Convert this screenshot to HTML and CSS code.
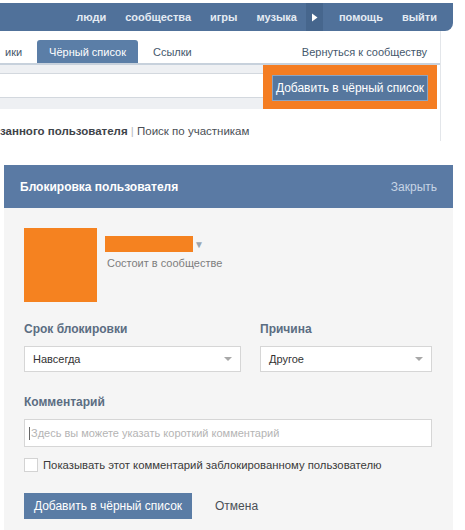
FILE: index.html
```html
<!DOCTYPE html>
<html>
<head>
    <meta charset="utf-8">
    <title>Чёрный список</title>
    <link rel="stylesheet" href="styles.css">
</head>
<body>
    <div class="page">
        <div class="topbar">
            <a class="nav-link">люди</a>
            <a class="nav-link">сообщества</a>
            <a class="nav-link">игры</a>
            <a class="nav-link">музыка</a>
            <span class="nav-more">
                <svg width="7" height="9" viewBox="0 0 7 9"><path d="M1 0.5 L6.5 4.5 L1 8.5 Z" fill="#fff"/></svg>
            </span>
            <a class="nav-link">помощь</a>
            <a class="nav-link">выйти</a>
        </div>

        <div class="content">
            <div class="tabs">
                <span class="tab">ики</span>
                <span class="tab tab-active">Чёрный список</span>
                <span class="tab">Ссылки</span>
                <span class="tab-back">Вернуться к сообществу</span>
            </div>

            <div class="search-row">
                <div class="search-field">
                    <div class="search-input"></div>
                </div>
                <div class="highlight">
                    <button class="btn btn-top">Добавить в чёрный список</button>
                </div>
            </div>

            <p class="sub-links"><b>занного пользователя</b> <span class="sep">|</span> Поиск по участникам</p>
        </div>
    </div>

    <div class="modal">
        <div class="modal-head">
            <span class="modal-title">Блокировка пользователя</span>
            <a class="modal-close">Закрыть</a>
        </div>
        <div class="modal-body">
            <div class="user">
                <div class="avatar"></div>
                <div class="user-info">
                    <div class="user-name">
                        <span class="name-bar"></span>
                        <span class="name-arrow">▼</span>
                    </div>
                    <div class="user-status">Состоит в сообществе</div>
                </div>
            </div>

            <div class="fields">
                <div class="field field-term">
                    <div class="label">Срок блокировки</div>
                    <div class="select">
                        <span>Навсегда</span>
                        <span class="select-arrow"></span>
                    </div>
                </div>
                <div class="field field-reason">
                    <div class="label">Причина</div>
                    <div class="select">
                        <span>Другое</span>
                        <span class="select-arrow"></span>
                    </div>
                </div>
            </div>

            <div class="label">Комментарий</div>
            <div class="comment">
                <span class="caret"></span>
                <span class="placeholder">Здесь вы можете указать короткий комментарий</span>
            </div>

            <label class="check">
                <span class="check-box"></span>
                Показывать этот комментарий заблокированному пользователю
            </label>

            <div class="actions">
                <button class="btn btn-main">Добавить в чёрный список</button>
                <a class="cancel">Отмена</a>
            </div>
        </div>
    </div>
</body>
</html>
```

FILE: styles.css
```css
body {
    margin: 0;
    padding: 0;
    width: 465px;
    height: 530px;
    overflow: hidden;
    background-color: #fff;
    font-family: "Liberation Sans", Arial, sans-serif;
    font-size: 12px;
    color: #333;
}

a {
    cursor: pointer;
}

/* top part of the page */

.page {
    height: 150px;
}

.topbar {
    display: flex;
    align-items: center;
    justify-content: flex-end;
    width: 453px;
    height: 28px;
    margin-top: 3px;
    padding-right: 16px;
    box-sizing: border-box;
    background-color: #50719a;
    border-bottom-right-radius: 8px;
}

.nav-link {
    margin-left: 19px;
    color: #e4ebf3;
    font-weight: bold;
    font-size: 11px;
}

.nav-more {
    display: flex;
    align-items: center;
    justify-content: center;
    width: 17px;
    height: 28px;
    margin-left: 9px;
    margin-right: -3px;
    background-color: #46668d;
}

.content {
    width: 440px;
    height: 110px;
    border-right: 1px solid #e3e6ea;
}

.tabs {
    display: flex;
    align-items: flex-end;
    height: 32px;
    font-size: 11px;
    border-bottom: 2px solid #c7d1dc;
}

.tab {
    padding: 0 15px 5px;
    color: #45586c;
}

.tab:first-child {
    padding-left: 5px;
}

.tab-active {
    padding: 6px 12px 5px;
    background-color: #5b7ea7;
    color: #fff;
    border-radius: 3px 3px 0 0;
}

.tab-back {
    margin-left: auto;
    padding: 0 13px 5px 0;
    color: #45586c;
}

.search-row {
    display: flex;
    height: 44px;
}

.search-field {
    flex: 1;
    padding-top: 8px;
    background-color: #eef0f3;
    height: 36px;
}

.search-input {
    height: 23px;
    background-color: #fff;
    border-top: 1px solid #d3d8de;
    border-bottom: 1px solid #d3d8de;
}

.highlight {
    width: 174px;
    margin-right: 3px;
    padding: 10px 9px 8px 9px;
    box-sizing: border-box;
    background-color: #f47d22;
}

.btn {
    font-family: "Liberation Sans", Arial, sans-serif;
    font-size: 12px;
    color: #fff;
    background-color: #56779e;
    border: 1px solid #8aa4c2;
    cursor: pointer;
}

.btn-top {
    width: 100%;
    height: 26px;
    padding: 0;
}

.sub-links {
    margin: 0;
    padding-top: 16px;
    font-size: 11.5px;
    color: #4a4f56;
}

.sub-links b {
    color: #3e4349;
}

.sep {
    color: #b5bac0;
}

/* block user dialog */

.modal {
    width: 449px;
    margin: 12px 0 0 4px;
    height: 368px;
    background-color: #f5f5f5;
}

.modal-head {
    display: flex;
    align-items: center;
    justify-content: space-between;
    height: 43px;
    padding: 0 16px;
    background-color: #5a7aa4;
}

.modal-title {
    color: #fff;
    font-weight: bold;
}

.modal-close {
    color: #c6d4e4;
}

.modal-body {
    padding: 20px 21px 0 20px;
}

.user {
    display: flex;
    height: 74px;
}

.avatar {
    width: 73px;
    height: 74px;
    background-color: #f58220;
}

.user-info {
    padding: 8px 0 0 8px;
}

.user-name {
    display: flex;
    align-items: center;
    height: 16px;
}

.name-bar {
    display: inline-block;
    width: 88px;
    height: 16px;
    background-color: #f58220;
}

.name-arrow {
    margin-left: 1px;
    font-size: 10px;
    color: #9aa5b0;
}

.user-status {
    margin: 5px 0 0 2px;
    font-size: 11px;
    color: #7d7d7d;
}

.fields {
    display: flex;
    gap: 19px;
    margin-top: 20px;
}

.field-term {
    width: 217px;
}

.field-reason {
    width: 172px;
}

.label {
    height: 17px;
    margin-bottom: 7px;
    margin-top: 0;
    font-weight: bold;
    color: #5b6d82;
}

.select {
    display: flex;
    align-items: center;
    justify-content: space-between;
    height: 24px;
    padding: 0 8px 0 8px;
    background-color: #fff;
    border: 1px solid #d6d6d6;
    font-size: 11px;
    color: #333;
}

.select-arrow {
    width: 0;
    height: 0;
    border-left: 4px solid transparent;
    border-right: 4px solid transparent;
    border-top: 4px solid #a8a8a8;
}

.modal-body > .label {
    margin-top: 23px;
}

.comment {
    display: flex;
    align-items: center;
    height: 26px;
    width: 402px;
    padding-left: 4px;
    background-color: #fff;
    border: 1px solid #d6d6d6;
    font-size: 11px;
}

.caret {
    width: 1px;
    height: 13px;
    margin-right: 1px;
    background-color: #666;
}

.placeholder {
    color: #b4b4b4;
}

.check {
    display: flex;
    align-items: center;
    gap: 5px;
    margin-top: 11px;
    font-size: 11.3px;
    color: #3a3a3a;
}

.check-box {
    width: 12px;
    height: 12px;
    background-color: #fff;
    border: 1px solid #d3d3d3;
}

.actions {
    display: flex;
    align-items: center;
    gap: 23px;
    margin-top: 21px;
}

.btn-main {
    width: 168px;
    height: 26px;
    padding: 0;
    background-color: #5a7ca5;
    border-color: #5a7ca5;
}

.cancel {
    color: #4a4f56;
}
```
